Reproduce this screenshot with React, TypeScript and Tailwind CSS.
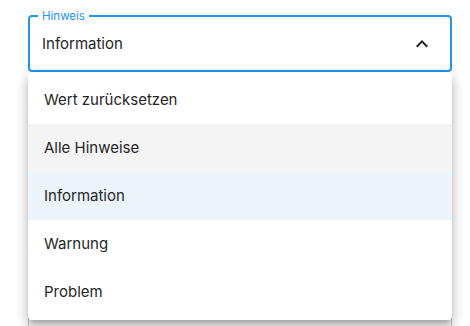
const options = [
  { label: "Wert zurücksetzen", state: "" },
  { label: "Alle Hinweise", state: "hover" },
  { label: "Information", state: "selected" },
  { label: "Warnung", state: "" },
  { label: "Problem", state: "" },
];

function ChevronUp() {
  return (
    <svg viewBox="0 0 24 24" className="h-6 w-6 fill-[#222]">
      <path d="M12 8l-6 6 1.41 1.41L12 10.83l4.59 4.58L18 14z" />
    </svg>
  );
}

export default function App() {
  return (
    <div className="relative h-[326px] w-[470px] overflow-hidden bg-white font-['Inter',sans-serif] text-[#262626]">
      <div className="flex w-[424px] flex-col pl-[28px] pt-[15px] box-content">
        {/* Select field (open) */}
        <div className="relative flex h-[57px] items-center justify-between rounded-[4px] border-2 border-[#2196f3] pl-[12px] pr-[16px]">
          <span className="absolute -top-[9px] left-[8px] bg-white px-[4px] text-[11.5px] leading-[16px] text-[#2196f3]">
            Hinweis
          </span>
          <span className="pt-[2px] text-[15px]">Information</span>
          <ChevronUp />
        </div>

        {/* Next field, mostly hidden under the menu */}
        <div className="mt-[235px] flex h-[56px] items-center rounded-[4px] border border-[#c4c4c4] pl-[13px]">
          <span className="text-[15px]">Problem</span>
        </div>
      </div>

      {/* Dropdown menu */}
      <div className="absolute left-[28px] top-[72px] w-[424px] rounded-[4px] bg-white py-[4px] shadow-[0_5px_5px_-3px_rgba(0,0,0,0.2),0_8px_10px_1px_rgba(0,0,0,0.14),0_3px_14px_2px_rgba(0,0,0,0.12)]">
        {options.map((o) => (
          <div
            key={o.label}
            className={
              "flex h-[48px] items-center px-[16px] text-[15px] " +
              (o.state === "hover"
                ? "bg-[#f4f4f4]"
                : o.state === "selected"
                ? "bg-[#edf5fc]"
                : "")
            }
          >
            {o.label}
          </div>
        ))}
      </div>
    </div>
  );
}
